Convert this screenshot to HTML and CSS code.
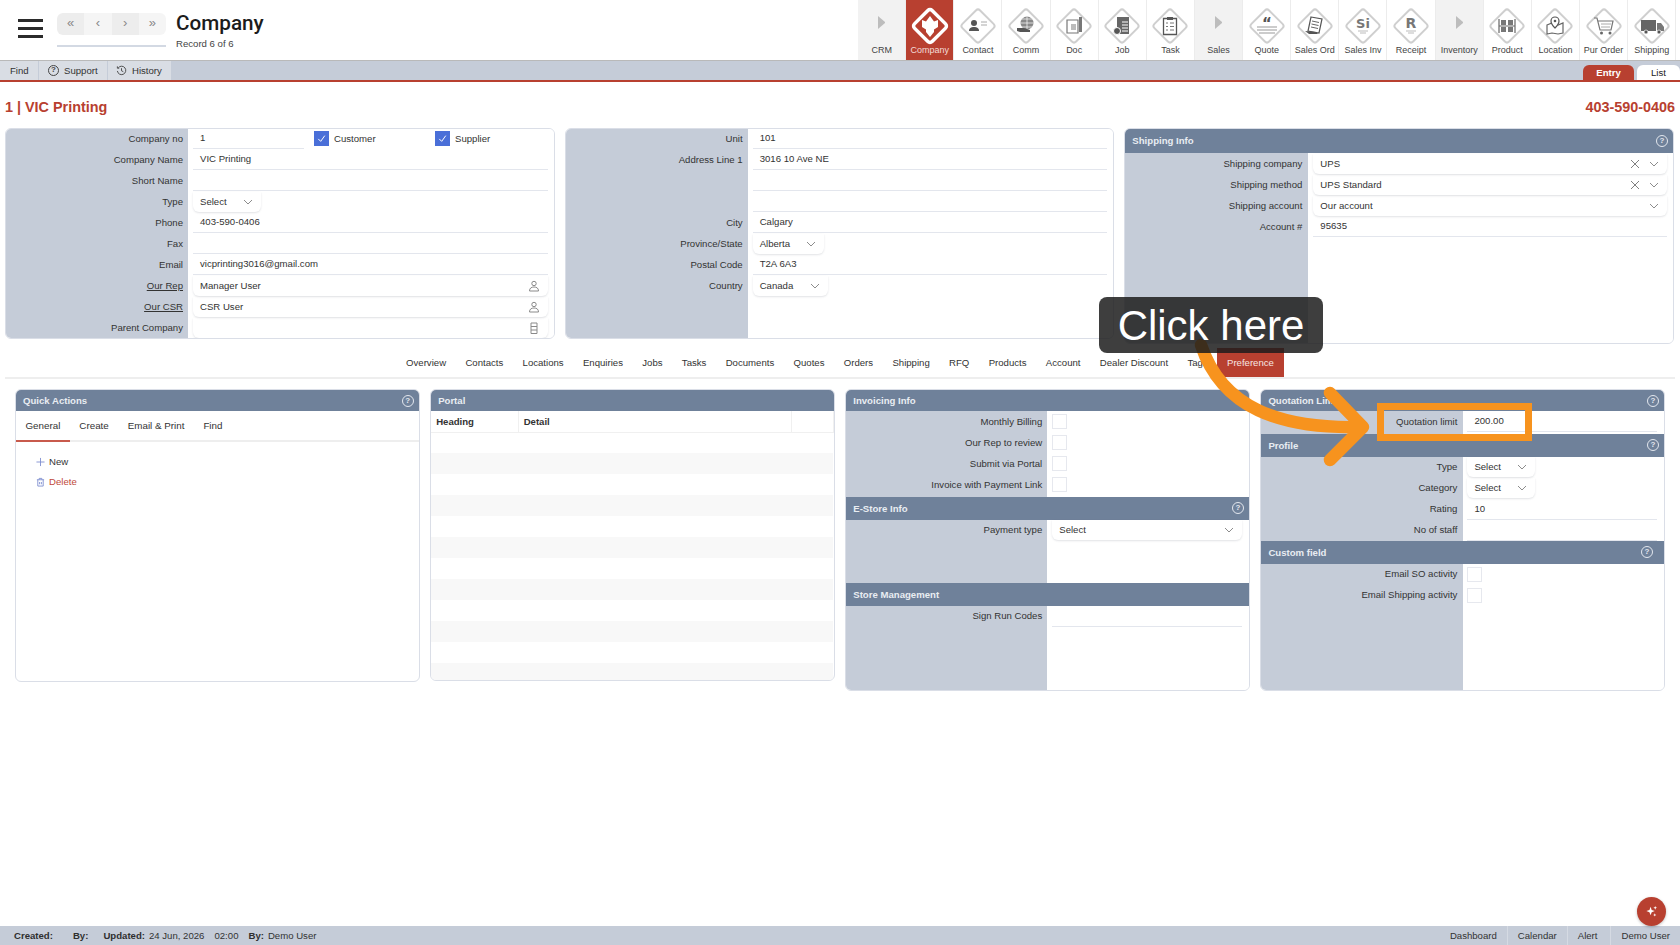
FILE: index.html

```html
<!DOCTYPE html>
<html lang="en">
 <head>
  <meta charset="UTF-8">
  <title>Company</title>
  <link rel="stylesheet" href="styles.css">
 </head>
 <body>
  <svg class="defs" width="0" height="0">
   <symbol id="diamond" viewBox="0 0 38 38"><rect x="6.5" y="6.5" width="25" height="25" rx="3" transform="rotate(45 19 19)" fill="#fff" stroke="#cfcfcf" stroke-width="2"/></symbol>
   <symbol id="chev" viewBox="0 0 10 6"><path d="M1 1l4 4 4-4" fill="none" stroke="#8c8c8c" stroke-width="1"/></symbol>
   <symbol id="cross" viewBox="0 0 10 10"><path d="M1 1l8 8M9 1l-8 8" fill="none" stroke="#808080" stroke-width="1"/></symbol>
   <symbol id="user" viewBox="0 0 12 12"><circle cx="6" cy="3.5" r="2.2" fill="none" stroke="#8a8a8a"/><path d="M1.5 11c0-3 2-4 4.500-4s4.500 1 4.500 4z" fill="none" stroke="#8a8a8a"/></symbol>
  </svg>

  <header class="top">
   <div class="burger"><i></i><i></i><i></i></div>
   <div class="pager">
    <div class="pager-btns"><span>«</span><span>‹</span><span>›</span><span>»</span></div>
   </div>
   <div class="rec">
    <div class="rec-title">Company</div>
    <div class="rec-sub">Record 6 of 6</div>
   </div>
   <nav class="mods">
    <a class="mod group"><b class="tri"></b>CRM</a>
    <a class="mod active">
     <svg viewBox="0 0 38 38"><rect x="6.500" y="6.500" width="25" height="25" rx="3" transform="rotate(45 19 19)" fill="#b84030" stroke="#fff" stroke-width="3.500"/><path d="M11 13l4 1.500L19 9l4 5.500 4-1.500v7l-4 2.500v2.500l-4 5-4-5v-2.500L11 20z" fill="#fff"/></svg>
     Company</a>
    <a class="mod"><svg viewBox="0 0 38 38"><use href="#diamond"/><circle cx="15" cy="16" r="3" fill="#555"/><path d="M10 24c0-3 2-4 5-4s5 1 5 4z" fill="#555"/><path d="M22 15h6M22 18h6" stroke="#aaa"/></svg>Contact</a>
    <a class="mod"><svg viewBox="0 0 38 38"><use href="#diamond"/><circle cx="20" cy="16" r="6.500" fill="#888"/><path d="M13.500 16h13M20 9.500v13M15 12h10M15 20h10" stroke="#fff" stroke-width=".7"/><path d="M10 21h7l6 2v2H13l-3-1z" fill="#555"/></svg>Comm</a>
    <a class="mod"><svg viewBox="0 0 38 38"><use href="#diamond"/><path d="M12 13h11v13H12z" fill="#fff" stroke="#777" stroke-width="1.200"/><path d="M16 17h5v6h-5z" fill="#bbb"/><path d="M24 10h3v15h-3z" fill="#777"/></svg>Doc</a>
    <a class="mod"><svg viewBox="0 0 38 38"><use href="#diamond"/><path d="M14 10h12v17H14z" fill="#666"/><path d="M19 15h6M19 18h6M19 21h6M19 24h6" stroke="#fff"/><circle cx="14" cy="24" r="3.500" fill="#555" stroke="#fff"/></svg>Job</a>
    <a class="mod"><svg viewBox="0 0 38 38"><use href="#diamond"/><path d="M12.500 11.500h13v16h-13z" fill="#fff" stroke="#555" stroke-width="1.300"/><path d="M16 10h6v3h-6z" fill="#555"/><path d="M15 16h2M15 19.500h2M15 23h2M19 16h4M19 19.500h4M19 23h4" stroke="#777"/></svg>Task</a>
    <a class="mod group"><b class="tri"></b>Sales</a>
    <a class="mod"><svg viewBox="0 0 38 38"><use href="#diamond"/><text x="19" y="22" text-anchor="middle" font-size="15" font-weight="700" font-family="DejaVu Sans" fill="#555">“</text><path d="M9 20h20M9 23h20M11 26h16" stroke="#999"/></svg>Quote</a>
    <a class="mod"><svg viewBox="0 0 38 38"><use href="#diamond"/><path d="M15 10l11 2-3 14-11-2z" fill="#fff" stroke="#555" stroke-width="1.200"/><path d="M16 14l7 1.500M15.500 17l7 1.500M15 20l7 1.500" stroke="#666"/><path d="M9 24l4 3h9l-2-2z" fill="#555"/></svg>Sales Ord</a>
    <a class="mod"><svg viewBox="0 0 38 38"><use href="#diamond"/><text x="19" y="21" text-anchor="middle" font-size="13" font-weight="700" font-family="DejaVu Sans" fill="#777">Si</text><path d="M14 24h10M16 26h6" stroke="#bbb"/></svg>Sales Inv</a>
    <a class="mod"><svg viewBox="0 0 38 38"><use href="#diamond"/><text x="19" y="21" text-anchor="middle" font-size="14" font-weight="700" font-family="DejaVu Sans" fill="#777">R</text><path d="M14 24h10M16 26h6" stroke="#bbb"/></svg>Receipt</a>
    <a class="mod group"><b class="tri"></b>Inventory</a>
    <a class="mod"><svg viewBox="0 0 38 38"><use href="#diamond"/><path d="M11 12v14M27 12v14M11 19h16" stroke="#666" stroke-width="1.200"/><path d="M13 13h5v5h-5zM20 13h5v5h-5zM13 20h5v5h-5zM20 20h5v5h-5z" fill="#777"/></svg>Product</a>
    <a class="mod"><svg viewBox="0 0 38 38"><use href="#diamond"/><path d="M11 18l5-2 6 2 5-2v10l-5 1-6-1-5 1z" fill="#fff" stroke="#666" stroke-width="1.200"/><path d="M19 21c-3-3-4-5-4-7a4 4 0 018 0c0 2-1 4-4 7z" fill="#fff" stroke="#555" stroke-width="1.200"/><circle cx="19" cy="14" r="1.300" fill="#555"/></svg>Location</a>
    <a class="mod"><svg viewBox="0 0 38 38"><use href="#diamond"/><path d="M9 11h3l3 12h11l2-9H13" fill="none" stroke="#777" stroke-width="1.200"/><path d="M16 17h10M16 20h9" stroke="#aaa"/><circle cx="16.500" cy="26" r="1.500" fill="#666"/><circle cx="25" cy="26" r="1.500" fill="#666"/></svg>Pur Order</a>
    <a class="mod"><svg viewBox="0 0 38 38"><use href="#diamond"/><path d="M8 13h15v11H8z" fill="#666"/><path d="M24 16h4l3 4v4h-7z" fill="#777"/><circle cx="13" cy="25" r="2" fill="#555" stroke="#fff" stroke-width=".7"/><circle cx="26" cy="25" r="2" fill="#555" stroke="#fff" stroke-width=".7"/></svg>Shipping</a>
   </nav>
  </header>

  <div class="subbar">
   <a class="sub-btn find">Find</a>
   <a class="sub-btn support"><span class="help dark">?</span>Support</a>
   <a class="sub-btn history"><svg class="ico11" viewBox="0 0 12 12"><path d="M2.500 3a4.600 4.600 0 11-1 3.500M1.500 1.500V3.500h2M6 3.500V6.300l2 1" fill="none" stroke="#444"/></svg>History</a>
   <div class="view-tabs">
    <a class="view-tab on">Entry</a>
    <a class="view-tab">List</a>
   </div>
  </div>

  <main class="main">
   <div class="heading">
    <h1>1 | VIC Printing</h1>
    <h2>403-590-0406</h2>
   </div>

   <div class="top-panels">
    <section class="panel top-h">
     <div class="form">
      <div class="row"><label>Company no</label>
       <div class="val no">1</div>
       <span class="check on"><svg viewBox="0 0 16 16"><path d="M4 8.500l3 3 5-7" fill="none" stroke="#fff" stroke-width="1.200"/></svg></span><span class="check-text cust">Customer</span>
       <span class="check on"><svg viewBox="0 0 16 16"><path d="M4 8.500l3 3 5-7" fill="none" stroke="#fff" stroke-width="1.200"/></svg></span><span class="check-text">Supplier</span>
      </div>
      <div class="row"><label>Company Name</label><div class="val">VIC Printing</div></div>
      <div class="row"><label>Short Name</label><div class="val"></div></div>
      <div class="row"><label>Type</label><div class="val sel w68">Select<svg class="chev"><use href="#chev"/></svg></div></div>
      <div class="row"><label>Phone</label><div class="val">403-590-0406</div></div>
      <div class="row"><label>Fax</label><div class="val"></div></div>
      <div class="row"><label>Email</label><div class="val">vicprinting3016@gmail.com</div></div>
      <div class="row"><label class="link">Our Rep</label><div class="val sel">Manager User<svg class="user"><use href="#user"/></svg></div></div>
      <div class="row"><label class="link">Our CSR</label><div class="val sel">CSR User<svg class="user"><use href="#user"/></svg></div></div>
      <div class="row"><label>Parent Company</label><div class="val sel"><svg class="user" viewBox="0 0 12 12"><path d="M3 1h6v10.500H3zM3 4.500h6M3 8h6" fill="none" stroke="#8a8a8a"/></svg></div></div>
     </div>
    </section>

    <section class="panel top-h">
     <div class="form">
      <div class="row"><label>Unit</label><div class="val">101</div></div>
      <div class="row"><label>Address Line 1</label><div class="val">3016 10 Ave NE</div></div>
      <div class="row"><label></label><div class="val"></div></div>
      <div class="row"><label></label><div class="val"></div></div>
      <div class="row"><label>City</label><div class="val">Calgary</div></div>
      <div class="row"><label>Province/State</label><div class="val sel w71">Alberta<svg class="chev"><use href="#chev"/></svg></div></div>
      <div class="row"><label>Postal Code</label><div class="val">T2A 6A3</div></div>
      <div class="row"><label>Country</label><div class="val sel w75">Canada<svg class="chev"><use href="#chev"/></svg></div></div>
     </div>
    </section>

    <section class="panel ship-h">
     <div class="bar tall">Shipping Info<span class="help">?</span></div>
     <div class="form">
      <div class="row"><label>Shipping company</label><div class="val sel">UPS<svg class="cross"><use href="#cross"/></svg><svg class="chev"><use href="#chev"/></svg></div></div>
      <div class="row"><label>Shipping method</label><div class="val sel">UPS Standard<svg class="cross"><use href="#cross"/></svg><svg class="chev"><use href="#chev"/></svg></div></div>
      <div class="row"><label>Shipping account</label><div class="val sel">Our account<svg class="chev"><use href="#chev"/></svg></div></div>
      <div class="row"><label>Account #</label><div class="val">95635</div></div>
     </div>
    </section>
   </div>

   <div class="tabs">
    <a>Overview</a><a>Contacts</a><a>Locations</a><a>Enquiries</a><a>Jobs</a><a>Tasks</a><a>Documents</a><a>Quotes</a><a>Orders</a><a>Shipping</a><a>RFQ</a><a>Products</a><a>Account</a><a>Dealer Discount</a><a>Tags</a><a class="on">Preference</a>
   </div>

   <div class="lower-panels">
    <section class="panel qa-h">
     <div class="bar">Quick Actions<span class="help">?</span></div>
     <div class="qa-tabs"><a class="on">General</a><a>Create</a><a>Email &amp; Print</a><a>Find</a></div>
     <div class="qa-list">
      <a class="qa-item"><svg viewBox="0 0 10 10"><path d="M5 .5v9M.5 5h9" stroke="#7f8fd0"/></svg>New</a>
      <a class="qa-item del"><svg viewBox="0 0 10 10"><path d="M1 2.500h8M2 2.500v7h6v-7M3.500 2.500V1h3v1.500M4 5v2.500M6 5v2.500" fill="none" stroke="#7f8fd0"/></svg>Delete</a>
     </div>
    </section>

    <section class="panel portal-h">
     <div class="bar">Portal</div>
     <table class="grid" cellspacing="0" cellpadding="0">
      <thead><tr><th class="c1">Heading</th><th class="c2">Detail</th><th></th></tr></thead>
      <tbody>
       <tr><td colspan="3"></td></tr>
       <tr class="even"><td colspan="3"></td></tr>
       <tr><td colspan="3"></td></tr>
       <tr class="even"><td colspan="3"></td></tr>
       <tr><td colspan="3"></td></tr>
       <tr class="even"><td colspan="3"></td></tr>
       <tr><td colspan="3"></td></tr>
       <tr class="even"><td colspan="3"></td></tr>
       <tr><td colspan="3"></td></tr>
       <tr class="even"><td colspan="3"></td></tr>
       <tr><td colspan="3"></td></tr>
       <tr class="even"><td colspan="3"></td></tr>
      </tbody>
     </table>
    </section>

    <section class="panel tall-h">
     <div class="bar">Invoicing Info</div>
     <div class="form small inv">
      <div class="row"><label>Monthly Billing</label><span class="check"></span></div>
      <div class="row"><label>Our Rep to review</label><span class="check"></span></div>
      <div class="row"><label>Submit via Portal</label><span class="check"></span></div>
      <div class="row"><label>Invoice with Payment Link</label><span class="check"></span></div>
     </div>
     <div class="bar">E-Store Info<span class="help">?</span></div>
     <div class="form small estore">
      <div class="row"><label>Payment type</label><div class="val sel">Select<svg class="chev"><use href="#chev"/></svg></div></div>
     </div>
     <div class="bar">Store Management</div>
     <div class="form small">
      <div class="row"><label>Sign Run Codes</label><div class="val"></div></div>
     </div>
    </section>

    <section class="panel tall-h wide-label">
     <div class="bar">Quotation Limit<span class="help">?</span></div>
     <div class="form small quote-limit">
      <div class="row"><label>Quotation limit</label><div class="val">200.00</div></div>
     </div>
     <div class="bar">Profile<span class="help">?</span></div>
     <div class="form small profile">
      <div class="row"><label>Type</label><div class="val sel w68">Select<svg class="chev"><use href="#chev"/></svg></div></div>
      <div class="row"><label>Category</label><div class="val sel w68">Select<svg class="chev"><use href="#chev"/></svg></div></div>
      <div class="row"><label>Rating</label><div class="val">10</div></div>
      <div class="row"><label>No of staff</label><div class="val"></div></div>
     </div>
     <div class="bar">Custom field<span class="help in">?</span></div>
     <div class="form small">
      <div class="row"><label>Email SO activity</label><span class="check"></span></div>
      <div class="row"><label>Email Shipping activity</label><span class="check"></span></div>
     </div>
    </section>
   </div>
  </main>

  <footer class="foot">
   <div class="foot-left">
    <b class="m20">Created:</b><b class="m15">By:</b><b class="m4">Updated:</b><span class="m10">24 Jun, 2026</span><span class="m10">02:00</span><b class="m4">By:</b><span>Demo User</span>
   </div>
   <div class="foot-right"><a>Dashboard</a><a>Calendar</a><a>Alert</a><a>Demo User</a></div>
  </footer>

  <a class="fab"><svg viewBox="0 0 14 14"><path d="M6 2l1.200 3.300L10.500 6.500 7.200 7.700 6 11 4.800 7.700 1.500 6.500l3.300-1.200zM11 1l.6 1.400L13 3l-1.400.6L11 5l-.6-1.400L9 3l1.400-.6zM10.500 9l.5 1.200 1.200.5-1.200.5-.5 1.300-.5-1.300-1.200-.5 1.200-.5z" fill="#fff"/></svg></a>

  <svg class="arrow" viewBox="0 0 1680 945"><path d="M1201 345C1222 408 1280 429 1360 427M1330 393l33 34-33 33" fill="none" stroke="#f7931e" stroke-width="12.500" stroke-linecap="round" stroke-linejoin="round"/></svg>
  <div class="callout">Click here</div>
  <div class="marker"></div>
 </body>
</html>
```

FILE: styles.css

```css
* {
	box-sizing: border-box;
}
body {
	margin: 0;
	height: 945px;
	display: flex;
	flex-direction: column;
	position: relative;
	overflow: hidden;
	background: #fff;
	color: #333;
	font: 9.6px/1.2 "Liberation Sans", Arial, sans-serif;
}
.defs {
	position: absolute;
}

/* top header */
.top {
	height: 61px;
	display: flex;
	border-bottom: 1px solid #b9b9b9;
}
.burger {
	width: 57px;
	padding: 19px 0 0 18px;
}
.burger i {
	display: block;
	width: 25px;
	height: 2.5px;
	margin-bottom: 5.5px;
	background: #2b2b2b;
}
.pager {
	width: 119px;
	padding-top: 13px;
}
.pager-btns {
	width: 109px;
	height: 34px;
	padding-bottom: 10px;
	border-bottom: 2px solid #d3d9e3;
	display: flex;
}
.pager-btns span {
	flex: 1;
	height: 22px;
	background: #ededed;
	color: #888;
	text-align: center;
	font-size: 13px;
	line-height: 19px;
}
.pager-btns span:nth-child(even) {
	background: #f5f5f5;
}
.pager-btns span:first-child {
	border-radius: 6px 0 0 6px;
}
.pager-btns span:last-child {
	border-radius: 0 6px 6px 0;
}
.rec {
	padding-top: 11px;
}
.rec-title {
	font: 500 20.7px/24px Roboto, sans-serif;
	color: #1c1c1c;
}
.rec-sub {
	margin-top: 3px;
	font-size: 9.6px;
	color: #444;
}
.mods {
	margin-left: auto;
	padding-right: 3.8px;
	display: flex;
}
.mod {
	width: 48.13px;
	height: 60px;
	border-right: 1px solid #ececec;
	text-align: center;
	font-size: 9px;
	color: #444;
	white-space: nowrap;
	line-height: 11px;
}
.mod svg {
	display: block;
	width: 38px;
	height: 38px;
	margin: 7px auto 0;
}
.mod.group {
	background: #f2f2f2;
}
.mod.active {
	background: #b84030;
	color: #f3dcd8;
}
.tri {
	display: block;
	width: 7px;
	height: 13px;
	margin: 16px auto 16px;
	border-left: 7px solid #bdbdbd;
	border-top: 6.5px solid transparent;
	border-bottom: 6.5px solid transparent;
}

/* sub toolbar */
.subbar {
	height: 21px;
	display: flex;
	background: #c5ccd8;
	border-bottom: 2px solid #b84030;
}
.sub-btn {
	display: flex;
	align-items: center;
	gap: 5px;
	margin-right: 1px;
	background: #d9dde4;
}
.find {
	width: 38px;
	padding-left: 10px;
}
.support {
	width: 68px;
	padding-left: 9px;
}
.history {
	width: 63px;
	padding-left: 8px;
}
.ico11 {
	width: 11px;
	height: 11px;
}
.view-tabs {
	margin-left: auto;
	display: flex;
	gap: 3px;
	padding-top: 4px;
}
.view-tab {
	width: 43px;
	background: #fff;
	border-radius: 6px 6px 0 0;
	text-align: center;
	line-height: 15px;
	color: #222;
}
.view-tab.on {
	width: 51px;
	background: #b84030;
	color: #fff;
	font-weight: bold;
}

/* body */
.main {
	flex: 1;
}
.heading {
	height: 46px;
	padding: 6px 5px 0;
	display: flex;
	justify-content: space-between;
	align-items: center;
	color: #b84030;
}
.heading h1,
.heading h2 {
	margin: 0;
	font-size: 14.4px;
	font-weight: bold;
}
.top-panels {
	display: flex;
	align-items: flex-start;
	gap: 10px;
	padding: 0 6px 0 5px;
}
.top-panels .panel {
	flex: 1;
	min-width: 0;
}
.panel {
	display: flex;
	flex-direction: column;
	background: #fff;
	border: 1px solid #dadee7;
	border-radius: 6px;
	overflow: hidden;
}
.top-h {
	height: 211px;
}
.top-h .form {
	margin-top: -1px;
}
.ship-h {
	height: 216px;
}
.ship-h .form {
	background: linear-gradient(90deg, #c5ccd8 183px, #fff 183px);
}
.ship-h .row label {
	margin-right: 11px;
}
.qa-h {
	height: 293px;
}
.portal-h {
	height: 292px;
}
.tall-h {
	height: 302px;
}
.bar {
	flex: none;
	height: 22.5px;
	padding: 0 7px;
	display: flex;
	align-items: center;
	justify-content: space-between;
	background: #6f819a;
	color: #e9edf2;
	font-weight: bold;
}
.bar:first-child {
	height: 21px;
}
.bar.tall {
	height: 24px;
}
.help {
	width: 12px;
	height: 12px;
	margin-right: -2px;
	border: 1.2px solid #e3e7ee;
	border-radius: 50%;
	color: #e3e7ee;
	text-align: center;
	font-size: 8px;
	font-weight: bold;
	line-height: 9.6px;
}
.help.in {
	margin-right: 4px;
}
.help.dark {
	width: 11px;
	height: 11px;
	margin: 0;
	border-color: #444;
	color: #444;
	line-height: 8.6px;
}
.form {
	flex: 1;
	background: linear-gradient(90deg, #c5ccd8 182px, #fff 182px);
}
.form.small {
	background: linear-gradient(90deg, #c5ccd8 201px, #fff 201px);
}
.wide-label .form.small {
	background: linear-gradient(90deg, #c5ccd8 202px, #fff 202px);
}
.row {
	height: 21px;
	display: flex;
	align-items: center;
	padding-right: 6px;
}
.row label {
	flex: none;
	width: 177px;
	margin-right: 10px;
	text-align: right;
	color: #333;
}
.row .link {
	text-decoration: underline;
}
.form.small .row label {
	width: 196px;
}
.form.small .row {
	padding-right: 7px;
}
.val {
	flex: 1;
	height: 21px;
	padding-left: 7px;
	display: flex;
	align-items: center;
	border-bottom: 1px solid #e3e6ed;
	min-width: 0;
	white-space: nowrap;
}
.val.no {
	flex: none;
	width: 111px;
	margin-right: 10px;
}
.val.sel {
	border-bottom: 0;
	border-radius: 0 0 6px 6px;
	box-shadow: 0 1px 2px rgba(60, 70, 90, .15);
	height: 20px;
}
.w68,
.w71,
.w75 {
	flex: none !important;
}
.w68 {
	width: 68px;
}
.w71 {
	width: 71px;
}
.w75 {
	width: 75px;
}
.chev {
	width: 10px;
	height: 6px;
	margin-left: auto;
	margin-right: 8px;
}
.cross {
	width: 10px;
	height: 10px;
	margin-left: auto;
	margin-right: -2px;
}
.cross + .chev {
	margin-left: 11px;
}
.user {
	width: 12px;
	height: 12px;
	margin-left: auto;
	margin-right: 8px;
}
.check {
	flex: none;
	width: 15px;
	height: 15px;
	border: 1px solid #e6e8ee;
	background: #fff;
}
.check.on {
	background: #4a6fd8;
	border-color: #4a6fd8;
}
.check svg {
	display: block;
}
.check-text {
	margin-left: 5px;
	width: 37px;
	white-space: nowrap;
}
.check-text.cust {
	width: 101px;
}
.inv {
	flex: none;
	height: 86px;
}
.estore {
	flex: none;
	height: 63.5px;
}
.quote-limit {
	flex: none;
	height: 23px;
}
.profile {
	flex: none;
	height: 84.5px;
}

/* tabs */
.tabs {
	margin: 4px 5px 0;
	height: 31px;
	border-bottom: 2px solid #eee;
	display: flex;
	justify-content: center;
}
.tabs a {
	height: 29px;
	padding: 0 9.67px;
	line-height: 29px;
	color: #333;
	white-space: nowrap;
}
.tabs a.on {
	background: #b84030;
	color: #f7e5e2;
}

.lower-panels {
	margin-top: 10px;
	padding: 0 15px;
	display: grid;
	grid-template-columns: repeat(4, 1fr);
	gap: 10.5px;
	align-items: start;
}

/* quick actions */
.qa-tabs {
	height: 31px;
	display: flex;
	border-bottom: 2px solid #eee;
	font-size: 9.8px;
}
.qa-tabs a {
	height: 31px;
	padding: 0 9.5px;
	line-height: 29px;
	color: #333;
}
.qa-tabs a.on {
	border-bottom: 2px solid #c85a4c;
}
.qa-list {
	padding: 10px 0 0 20px;
}
.qa-item {
	height: 20px;
	display: flex;
	align-items: center;
	gap: 4px;
}
.qa-item svg {
	width: 9px;
	height: 10px;
}
.qa-item.del {
	color: #c0483a;
}

/* portal table */
.grid {
	width: 100%;
	table-layout: fixed;
	border-collapse: collapse;
}
.grid th {
	height: 21px;
	padding-left: 5px;
	text-align: left;
	border-right: 1px solid #f0f0f0;
	border-bottom: 1px solid #f0f0f0;
	font-size: 9.6px;
}
.grid .c1 {
	width: 87px;
}
.grid .c2 {
	width: 273px;
}
.grid td {
	height: 21px;
}
.even {
	background: #f8f8f8;
}

/* footer */
.foot {
	height: 19px;
	padding: 0 0 0 14px;
	display: flex;
	align-items: center;
	background: #c5ccd8;
}
.m20 {
	margin-right: 20px;
}
.m15 {
	margin-right: 15px;
}
.m10 {
	margin-right: 10px;
}
.m4 {
	margin-right: 4px;
}
.foot-left b {
	color: #2f2f2f;
}
.foot-right {
	margin-left: auto;
	display: flex;
	height: 19px;
}
.foot-right a {
	padding: 0 10px;
	line-height: 19px;
	border-left: 1px solid #d5dae3;
}
.foot-right a:first-child {
	border-left: 0;
}
.foot-right a:nth-child(3) {
	padding-right: 13px;
}

/* overlays */
.fab {
	position: absolute;
	left: 1637px;
	top: 897px;
	width: 29px;
	height: 29px;
	border-radius: 50%;
	background: #b84030;
	box-shadow: 0 1px 3px rgba(0, 0, 0, .25);
	display: flex;
	align-items: center;
	justify-content: center;
}
.fab svg {
	width: 13px;
	height: 13px;
}
.arrow {
	position: absolute;
	left: 0;
	top: 0;
	width: 1680px;
	height: 945px;
}
.callout {
	position: absolute;
	left: 1099px;
	top: 297px;
	width: 224px;
	height: 56px;
	border-radius: 8px;
	background: rgba(28, 28, 28, .85);
	color: #fff;
	font-size: 42px;
	line-height: 57px;
	text-align: center;
}
.marker {
	position: absolute;
	left: 1377px;
	top: 403px;
	width: 155px;
	height: 38px;
	border: 7px solid #f7931e;
}
```
